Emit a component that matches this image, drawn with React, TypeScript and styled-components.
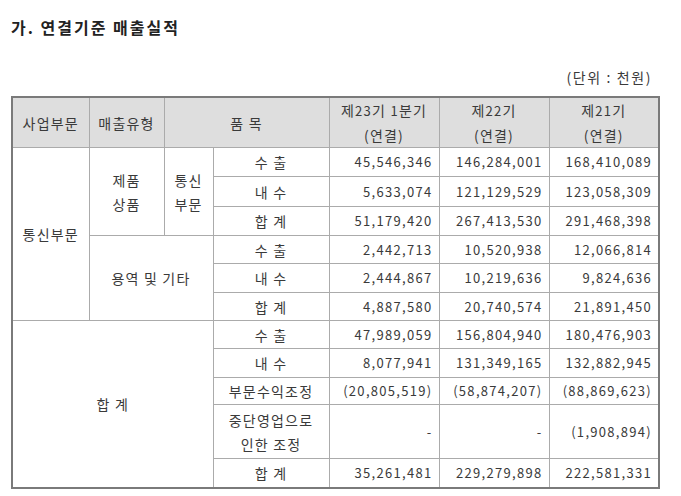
import React from "react";
import styled, { createGlobalStyle } from "styled-components";

const Global = createGlobalStyle`
  html, body { margin: 0; padding: 0; background: #fff; }
  body { font-family: "Noto Sans CJK KR", "Noto Sans", sans-serif; color: #3a3a3a; }
`;

const Page = styled.div`
  width: 681px;
  padding: 16px 0 0 11px;
  box-sizing: border-box;
`;

const Title = styled.h2`
  margin: 0;
  font-size: 16px;
  font-weight: 700;
  letter-spacing: 2px;
  line-height: 22px;
  color: #222;
`;

const Unit = styled.div`
  width: 641px;
  margin-top: 29px;
  text-align: right;
  font-size: 14px;
  letter-spacing: 1.6px;
  line-height: 20px;
`;

const Table = styled.table`
  margin-top: 9px;
  width: 647px;
  table-layout: fixed;
  border-collapse: collapse;
  border: 2px solid #7a7a7a;
  font-size: 14px;
  letter-spacing: 1.2px;
  color: #3a3a3a;
`;

const Th = styled.th`
  background: #dedede;
  font-weight: 400;
  border: 1px solid #ababab;
  height: 48px;
  padding: 0;
  line-height: 24px;
  text-align: center;
  white-space: nowrap;
`;

const Td = styled.td<{ $num?: boolean; $h?: number }>`
  border: 1px solid #ababab;
  height: ${(p) => p.$h ?? 27}px;
  padding: ${(p) => (p.$num ? "0 6px 0 0" : "0")};
  text-align: ${(p) => (p.$num ? "right" : "center")};
  font-size: ${(p) => (p.$num ? 13 : 14)}px;
  letter-spacing: ${(p) => (p.$num ? 1.3 : 1.2)}px;
  line-height: 24px;
  white-space: nowrap;
`;

const Num = styled.span`
  font-size: 13px;
  letter-spacing: 1.3px;
`;

export default function App() {
  const nums = (v: [string, string, string], h?: number) =>
    v.map((x, i) => (
      <Td key={i} $num $h={h}>
        {x}
      </Td>
    ));

  return (
    <>
      <Global />
      <Page>
        <Title>가. 연결기준 매출실적</Title>
        <Unit>(단위 : 천원)</Unit>
        <Table>
          <colgroup>
            <col style={{ width: 77 }} />
            <col style={{ width: 75 }} />
            <col style={{ width: 49 }} />
            <col style={{ width: 116 }} />
            <col style={{ width: 110 }} />
            <col style={{ width: 110 }} />
            <col style={{ width: 110 }} />
          </colgroup>
          <thead>
            <tr>
              <Th>사업부문</Th>
              <Th>매출유형</Th>
              <Th colSpan={2}>품 목</Th>
              <Th>
                제<Num>23</Num>기 <Num>1</Num>분기
                <br />
                (연결)
              </Th>
              <Th>
                제<Num>22</Num>기
                <br />
                (연결)
              </Th>
              <Th>
                제<Num>21</Num>기
                <br />
                (연결)
              </Th>
            </tr>
          </thead>
          <tbody>
            <tr>
              <Td rowSpan={6}>통신부문</Td>
              <Td rowSpan={3}>
                제품
                <br />
                상품
              </Td>
              <Td rowSpan={3}>
                통신
                <br />
                부문
              </Td>
              <Td $h={28}>수 출</Td>
              {nums(["45,546,346", "146,284,001", "168,410,089"], 28)}
            </tr>
            <tr>
              <Td $h={29}>내 수</Td>
              {nums(["5,633,074", "121,129,529", "123,058,309"], 29)}
            </tr>
            <tr>
              <Td $h={28}>합 계</Td>
              {nums(["51,179,420", "267,413,530", "291,468,398"], 28)}
            </tr>
            <tr>
              <Td rowSpan={3} colSpan={2}>
                용역 및 기타
              </Td>
              <Td $h={27}>수 출</Td>
              {nums(["2,442,713", "10,520,938", "12,066,814"], 27)}
            </tr>
            <tr>
              <Td $h={28}>내 수</Td>
              {nums(["2,444,867", "10,219,636", "9,824,636"], 28)}
            </tr>
            <tr>
              <Td $h={27}>합 계</Td>
              {nums(["4,887,580", "20,740,574", "21,891,450"], 27)}
            </tr>
            <tr>
              <Td rowSpan={6} colSpan={3}>
                합 계
              </Td>
              <Td $h={27}>수 출</Td>
              {nums(["47,989,059", "156,804,940", "180,476,903"], 27)}
            </tr>
            <tr>
              <Td $h={28}>내 수</Td>
              {nums(["8,077,941", "131,349,165", "132,882,945"], 28)}
            </tr>
            <tr>
              <Td $h={26}>부문수익조정</Td>
              {nums(["(20,805,519)", "(58,874,207)", "(88,869,623)"], 26)}
            </tr>
            <tr>
              <Td $h={53}>
                중단영업으로
                <br />
                인한 조정
              </Td>
              {nums(["-", "-", "(1,908,894)"], 53)}
            </tr>
            <tr>
              <Td $h={28}>합 계</Td>
              {nums(["35,261,481", "229,279,898", "222,581,331"], 28)}
            </tr>
          </tbody>
        </Table>
      </Page>
    </>
  );
}
